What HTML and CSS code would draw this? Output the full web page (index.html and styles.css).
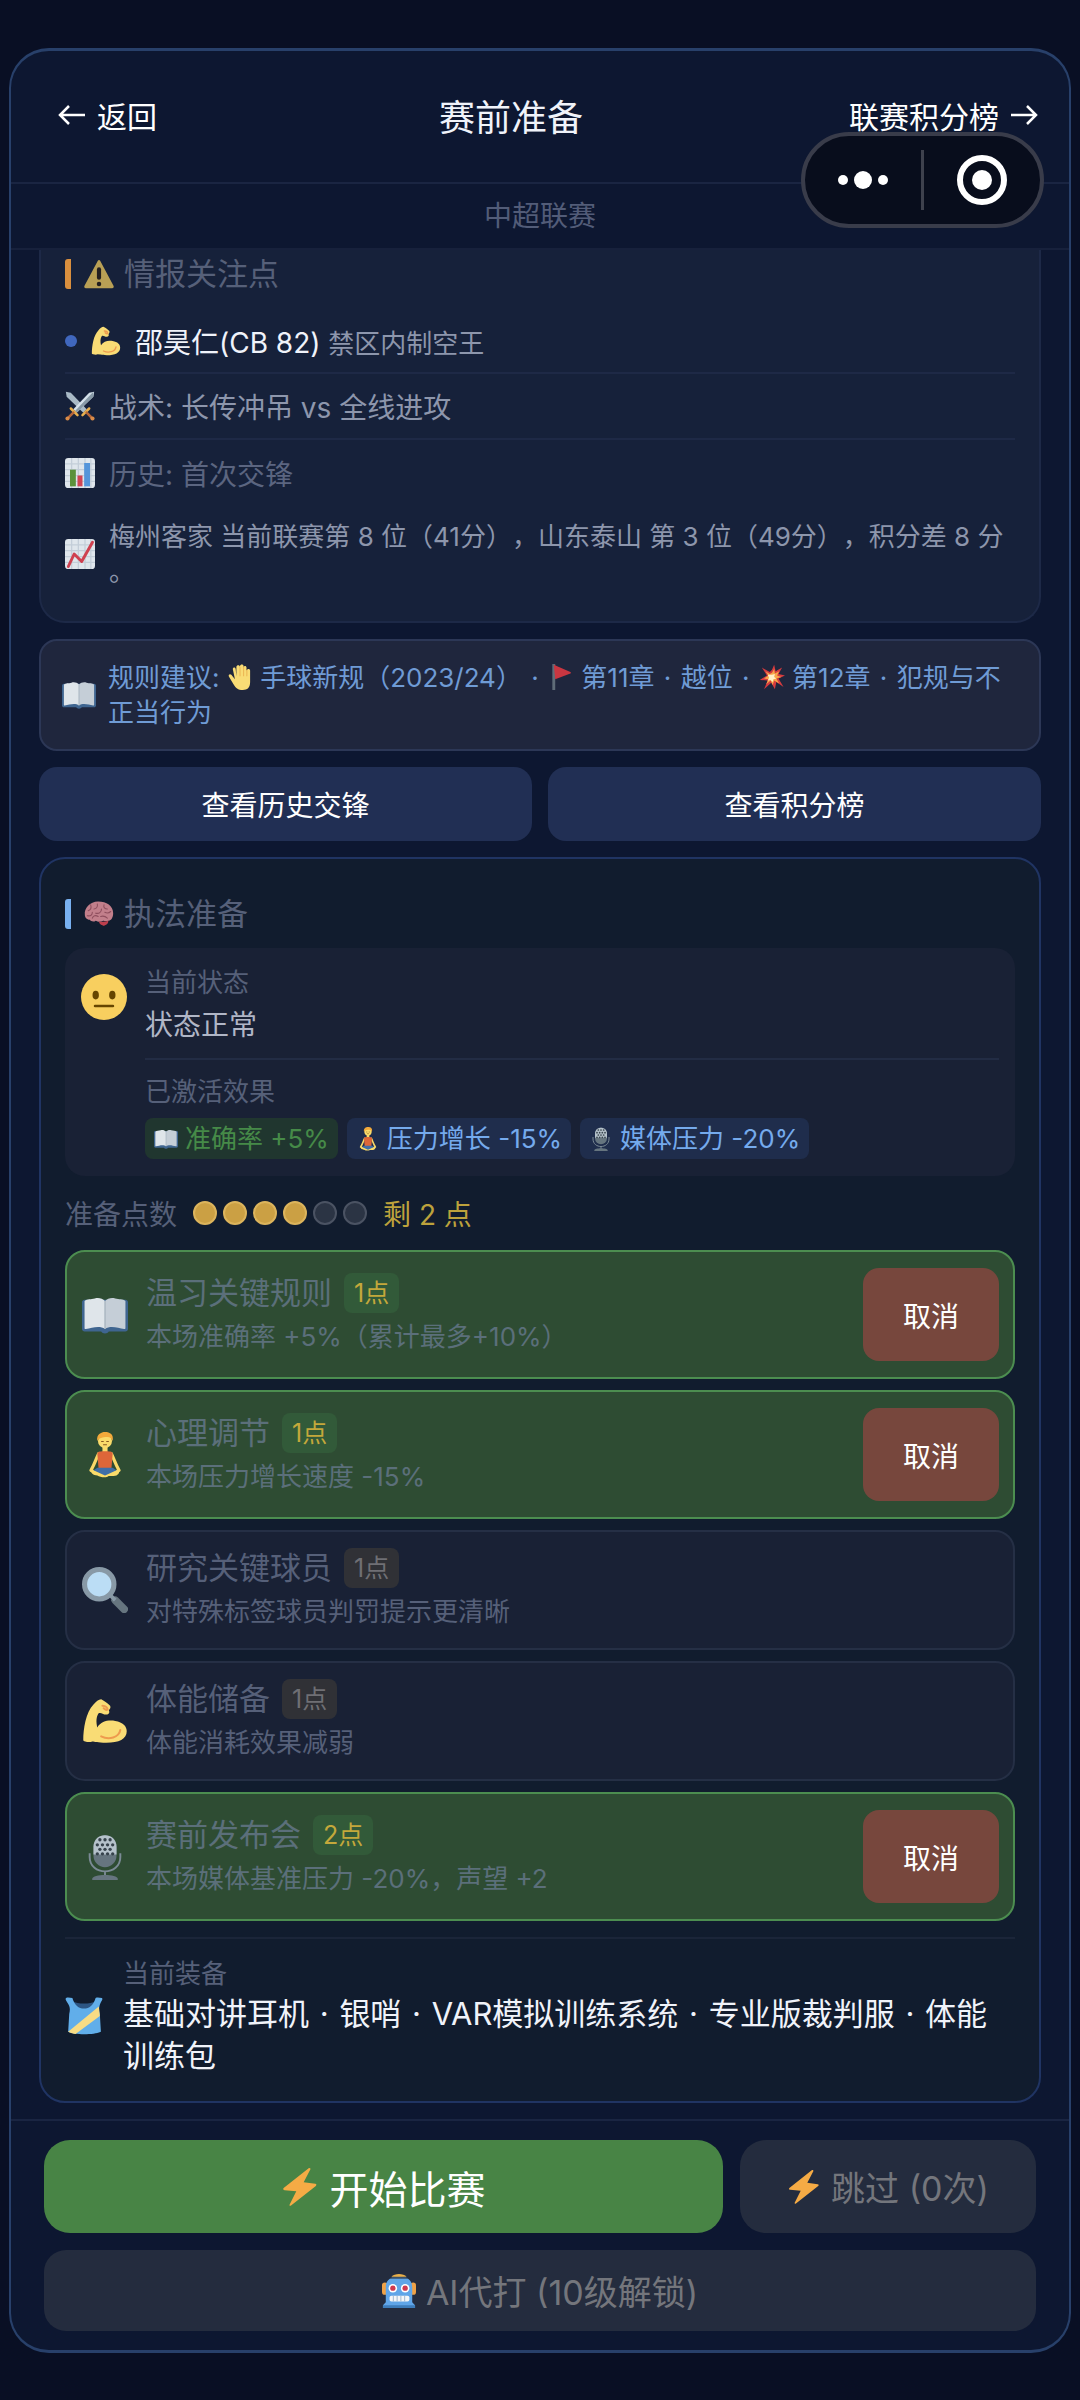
FILE: index.html
```html
<!DOCTYPE html>
<html lang="zh-CN">
<head>
    <meta charset="UTF-8">
    <meta name="viewport" content="width=device-width, initial-scale=1.0">
    <title>赛前准备</title>
    <link rel="stylesheet" href="styles.css">
</head>
<body>
    <!-- 图标 -->
    <svg class="sprite" aria-hidden="true">
        <symbol id="i-warn" viewBox="0 0 36 36">
            <path fill="#b9a055" d="M16.6 2.2c.6-1.2 2.2-1.2 2.8 0l16 30c.7 1.3 0 2.8-1.500 2.800H2.100C.6 35-.1 33.500.6 32.200z"/>
            <rect x="15.500" y="10" width="5" height="15" rx="2.500" fill="#231f20"/>
            <circle cx="18" cy="30" r="2.700" fill="#231f20"/>
        </symbol>
        <symbol id="i-arm" viewBox="0 0 36 36">
            <path fill="#f9dc75" d="M1 33c0-9 2-22 8-28 2-2 4-4 6-4 2 1 5 3 7 5 1 2-1 3-1 4 1 1 0 3-2 3-3 0-4-2-6-1-2 3-2 7-1 11 3-5 9-6 14-5 6 1 9 4 9 8 0 6-6 9-16 9-7 0-9-1-11-1-2 1-7 0-7-1z"/>
            <path fill="none" stroke="#ee9b4e" stroke-width="1.600" stroke-linecap="round" d="M15 30c6 3 14 1 15-5M16 6c3 0 4 2 4 3-1 1-2 0-3-1"/>
        </symbol>
        <symbol id="i-swords" viewBox="0 0 36 36">
            <path fill="#a9bac6" d="M1 1l6 1 19 20-4 4L2 7z"/>
            <path fill="#d5e1ea" d="M35 1l-6 1L10 22l4 4L34 7z"/>
            <path fill="#8799a6" d="M34 1L12 24l2 2L34 7z"/>
            <path stroke="#e9b04e" stroke-width="3" stroke-linecap="round" d="M7 21l8 8M29 21l-8 8"/>
            <path stroke="#b5673a" stroke-width="3" stroke-linecap="round" d="M10 26l-7 7M26 26l7 7"/>
            <circle cx="3" cy="33" r="2.500" fill="#d98b48"/>
            <circle cx="33" cy="33" r="2.500" fill="#d98b48"/>
        </symbol>
        <symbol id="i-bars" viewBox="0 0 36 36">
            <rect width="36" height="36" rx="4" fill="#dfe6ec"/>
            <path stroke="#c3ced8" stroke-width="1.500" d="M8 0v36M16 0v36M24 0v36M31 0v36M0 7h36M0 14h36M0 21h36M0 28h36"/>
            <rect x="6" y="14" width="7" height="20" fill="#5c913b"/>
            <rect x="15" y="21" width="6" height="13" fill="#d04554"/>
            <rect x="23" y="6" width="7" height="28" fill="#5495da"/>
        </symbol>
        <symbol id="i-trend" viewBox="0 0 36 36">
            <rect width="36" height="36" rx="4" fill="#dfe6ec"/>
            <path stroke="#c3ced8" stroke-width="1.500" d="M8 0v36M16 0v36M24 0v36M31 0v36M0 7h36M0 14h36M0 21h36M0 28h36"/>
            <path fill="none" stroke="#cf4150" stroke-width="3.500" stroke-linecap="round" stroke-linejoin="round" d="M4 33l7-15 9 9L33 4"/>
        </symbol>
        <symbol id="i-book" viewBox="0 0 36 36">
            <path fill="#3f6590" d="M0 8c0-1 1-2 2-2h32c1 0 2 1 2 2v21c0 1-1 2-2 2H21c-1 2-5 2-6 0H2c-1 0-2-1-2-2z"/>
            <path fill="#dfe5ea" d="M2 7c2-2 5-1 8-2 3-1 6 0 8 2v22c-4-3-10-1-15 0-1 0-1 0-1-1z"/>
            <path fill="#c5ced7" d="M34 7c-2-2-5-1-8-2-3-1-6 0-8 2v22c4-3 10-1 15 0 1 0 1 0 1-1z"/>
            <path stroke="#a5b2be" stroke-width="1" d="M18 7v22"/>
        </symbol>
        <symbol id="i-hand" viewBox="0 0 36 36">
            <path fill="#f9dc75" d="M8 7c0-3 4-3 4 0l1 10V4c0-3 5-3 5 0V3c0-3 5-3 5 0v2c0-3 4-3 4 0v4c1-3 5-3 5 0v16c0 8-4 11-10 11-7 0-10-3-13-8L3 18c-2-3 1-5 3-3l5 6z"/>
            <path stroke="#e6a545" stroke-width="1" d="M18 4v13M23 4v13M27.500 8v9"/>
        </symbol>
        <symbol id="i-flag" viewBox="0 0 36 36">
            <path fill="#5f6c78" d="M6 0h4v36H6z"/>
            <path fill="#c93641" d="M8 1l23 10c1 1 1 2 0 2L10 21z"/>
        </symbol>
        <symbol id="i-boom" viewBox="0 0 36 36">
            <path fill="#d63b3f" d="M18 8l3-7 2 9 9-5-5 9 9 2-9 4 7 12-10-7-2 10-5-9-10 9 5-12-11-1 10-6L4 5l11 6z"/>
            <path fill="#f6a74a" d="M18 12l3-5 1 6 6-3-3 6 6 2-7 2 4 7-7-4-2 6-3-6-6 5 3-7-6-1 6-4-4-6 6 4z"/>
            <path fill="#fff0c8" d="M18 15l4-1-1 4 3 2-4 1-1 4-3-3-4 1 2-4-2-4z"/>
        </symbol>
        <symbol id="i-brain" viewBox="0 0 36 36">
            <path fill="#c27f8b" d="M1 19C0 11 7 3 17 3s18 5 18 14c0 6-3 9-6 9-2 1-5 0-6 0-3 2-7 1-9 0-2 2-6 1-7-1-4 0-6-3-6-6z"/>
            <path fill="#bd3f4d" d="M18 27c4 1 7 0 11-1 1 3-3 6-6 6-2-1-5-2-5-5z"/>
            <path fill="none" stroke="#8f4f5e" stroke-width="1.300" stroke-linecap="round" d="M5 14c3-1 4-4 3-7M4 20c4 1 6-1 6-4M12 12c2 0 5-2 4-6M14 17c4 1 7-1 7-5M24 7c-1 3 1 5 4 5M25 16c2 1 5 1 7-1M10 23c1-3 4-4 7-2M20 21c3-1 6 0 8 2"/>
        </symbol>
        <symbol id="i-face" viewBox="0 0 36 36">
            <circle cx="18" cy="18" r="18" fill="#f8cf5f"/>
            <ellipse cx="11.500" cy="16.500" rx="2.500" ry="3.400" fill="#664500"/>
            <ellipse cx="24.500" cy="16.500" rx="2.500" ry="3.400" fill="#664500"/>
            <rect x="10" y="24" width="16" height="2" rx="1" fill="#664500"/>
        </symbol>
        <symbol id="i-yoga" viewBox="0 0 36 36">
            <path fill="none" stroke="#f9d868" stroke-width="2.500" stroke-linecap="round" stroke-linejoin="round" d="M13 17c-2 4-3 8-6 13l4 2M23 17c2 4 3 8 6 13l-4 2"/>
            <path fill="#fadb6a" d="M16 10h4v6h-4z"/>
            <circle cx="18" cy="7" r="5.500" fill="#fadb6a"/>
            <path fill="#f2a93b" d="M12 7c-1-5 3-7 6-7 4 0 7 2 6 7-1-2-2-3-4-3s-6 0-8 3z"/>
            <path fill="#dd6639" d="M12 17c0-2 3-2 6-2s6 0 6 2l-1 12H13z"/>
            <path fill="#fadb6a" d="M8 30c4 0 7 2 10 3 3-1 6-3 10-3 2 1 1 3-1 4-3 1-6 0-7 1-3 1-6 0-8-1-3 0-6-2-4-4z"/>
            <path fill="#3f6ea8" d="M12 28h12l3 2-9 4-9-4z"/>
            <path fill="none" stroke="#8a5a20" stroke-width=".8" d="M15 7.500h2M19 7.500h2M16.500 10h3"/>
        </symbol>
        <symbol id="i-mic" viewBox="0 0 36 36">
            <rect x="9" y="1" width="18" height="25" rx="9" fill="#66757f"/>
            <path fill="#b4c1ca" d="M9 16v-6c0-12 18-12 18 0v6z"/>
            <g fill="#37434c">
                <circle cx="14" cy="4.500" r="1.300"/><circle cx="18" cy="4.500" r="1.300"/><circle cx="22" cy="4.500" r="1.300"/>
                <circle cx="12" cy="8.500" r="1.300"/><circle cx="16" cy="8.500" r="1.300"/><circle cx="20" cy="8.500" r="1.300"/><circle cx="24" cy="8.500" r="1.300"/>
                <circle cx="14" cy="12" r="1.300"/><circle cx="18" cy="12" r="1.300"/><circle cx="22" cy="12" r="1.300"/>
                <circle cx="12" cy="15.500" r="1.300"/><circle cx="16" cy="15.500" r="1.300"/><circle cx="20" cy="15.500" r="1.300"/><circle cx="24" cy="15.500" r="1.300"/>
            </g>
            <path fill="none" stroke="#7b8a95" stroke-width="1.500" d="M6 15v3c0 15 24 15 24 0v-3M18 29v4"/>
            <path fill="#66757f" d="M8 35c0-4 20-4 20 0v1H8z"/>
        </symbol>
        <symbol id="i-lens" viewBox="0 0 36 36">
            <path stroke="#66757f" stroke-width="6" stroke-linecap="round" d="M26 26l7 7"/>
            <path stroke="#8899a6" stroke-width="3" d="M21 21l5 5"/>
            <circle cx="13.500" cy="13.500" r="11.500" fill="#bbddf5" stroke="#8899a6" stroke-width="4"/>
        </symbol>
        <symbol id="i-shirt" viewBox="0 0 36 36">
            <path fill="#2d5684" d="M7 4c5 3 17 3 22 0l-3 9H10z"/>
            <path fill="#61aeea" d="M1 1c2-1 4 0 6 0 2 7 6 10 11 10s9-3 11-10c2-1 4 0 6 0 1 1 0 2-1 4-2 4-2 7-1 11l1 17c-6 3-26 3-31 0l1-17c1-4 1-7-2-11C1 3 0 2 1 1z"/>
            <path fill="#f8dc84" d="M32 9l1 9L10 35c-2 0-5-1-7-2z"/>
        </symbol>
        <symbol id="i-bolt" viewBox="0 0 36 36">
            <path fill="#f5ab45" d="M26.500 0L2.500 19c-1 1 0 2 1 2l11 1L8 35c0 1 1 1 1.500.5L33 17c1-1 .5-2-.5-2l-11-1.500L28 1c0-1-1-1-1.500-1z"/>
        </symbol>
        <symbol id="i-robot" viewBox="0 0 36 36">
            <rect x="0" y="9" width="6" height="13" rx="3" fill="#f0a246"/>
            <rect x="30" y="9" width="6" height="13" rx="3" fill="#f0a246"/>
            <path fill="#5fa5e8" d="M4 30V14C4 6 10 3 18 3s14 3 14 11v16l3 3v3H1v-3z"/>
            <path fill="#3a516b" d="M8 5c4-4 16-4 20 0z"/>
            <path fill="#eab04a" d="M10 3c3-4 13-4 16 0z"/>
            <circle cx="11.500" cy="15" r="4.500" fill="#fff"/><circle cx="11.500" cy="15" r="2.800" fill="#cf3a50"/>
            <circle cx="24.500" cy="15" r="4.500" fill="#fff"/><circle cx="24.500" cy="15" r="2.800" fill="#cf3a50"/>
            <rect x="8" y="23" width="21" height="6" rx="2" fill="#f4f6f8"/>
            <path stroke="#9ab4cc" stroke-width="1" d="M12 23v6M16 23v6M20 23v6M24 23v6"/>
            <path fill="#3d7cba" d="M1 33h34v3H1z"/>
        </symbol>
        <symbol id="i-left" viewBox="0 0 30 30">
            <path fill="none" stroke="#fff" stroke-width="2.500" d="M28 15H3M12 6l-9 9 9 9"/>
        </symbol>
        <symbol id="i-right" viewBox="0 0 30 30">
            <path fill="none" stroke="#fff" stroke-width="2.500" d="M2 15h25M18 6l9 9-9 9"/>
        </symbol>
    </svg>

    <div class="phone">
        <header class="topbar">
            <button class="nav-btn nav-back"><svg class="i30"><use href="#i-left"/></svg>返回</button>
            <h1>赛前准备</h1>
            <button class="nav-btn">联赛积分榜<svg class="i30"><use href="#i-right"/></svg></button>
        </header>
        <div class="league">中超联赛</div>

        <main class="content">
            <section class="card intel">
                <h2 class="card-title orange"><svg class="i30"><use href="#i-warn"/></svg>情报关注点</h2>
                <div class="row player">
                    <span class="dot"></span>
                    <svg class="i30"><use href="#i-arm"/></svg>
                    <p><strong>邵昊仁(CB 82)</strong> <span class="note">禁区内制空王</span></p>
                </div>
                <div class="row line"><svg class="i30"><use href="#i-swords"/></svg>战术: 长传冲吊 vs 全线进攻</div>
                <div class="row dim"><svg class="i30"><use href="#i-bars"/></svg>历史: 首次交锋</div>
                <div class="row rank">
                    <svg class="i30"><use href="#i-trend"/></svg>
                    <p>梅州客家 当前联赛第 8 位（41分），山东泰山 第 3 位（49分），积分差 8 分。</p>
                </div>
            </section>

            <section class="card rules">
                <svg class="i34"><use href="#i-book"/></svg>
                <p>规则建议: <svg class="i26"><use href="#i-hand"/></svg> 手球新规（2023/24） <span class="sep">·</span> <svg class="i26"><use href="#i-flag"/></svg> 第11章 <span class="sep">·</span> 越位 <span class="sep">·</span> <svg class="i26"><use href="#i-boom"/></svg> 第12章 <span class="sep">·</span> 犯规与不正当行为</p>
            </section>

            <div class="links">
                <button>查看历史交锋</button>
                <button>查看积分榜</button>
            </div>

            <section class="card prep">
                <h2 class="card-title blue"><svg class="i30"><use href="#i-brain"/></svg>执法准备</h2>
                <div class="status">
                    <svg class="i46"><use href="#i-face"/></svg>
                    <div class="status-body">
                        <div class="label">当前状态</div>
                        <div class="state">状态正常</div>
                        <div class="effects">
                            <div class="label">已激活效果</div>
                            <div class="tags">
                                <span class="tag green"><svg class="i24"><use href="#i-book"/></svg>准确率 +5%</span>
                                <span class="tag"><svg class="i24"><use href="#i-yoga"/></svg>压力增长 -15%</span>
                                <span class="tag"><svg class="i24"><use href="#i-mic"/></svg>媒体压力 -20%</span>
                            </div>
                        </div>
                    </div>
                </div>

                <div class="points">
                    <span>准备点数</span>
                    <div class="dots"><i class="on"></i><i class="on"></i><i class="on"></i><i class="on"></i><i></i><i></i></div>
                    <span class="left">剩 2 点</span>
                </div>

                <ul class="items">
                    <li class="item active">
                        <svg class="i46"><use href="#i-book"/></svg>
                        <div class="item-text">
                            <h3>温习关键规则 <span class="cost">1点</span></h3>
                            <p>本场准确率 +5%（累计最多+10%）</p>
                        </div>
                        <button>取消</button>
                    </li>
                    <li class="item active">
                        <svg class="i46"><use href="#i-yoga"/></svg>
                        <div class="item-text">
                            <h3>心理调节 <span class="cost">1点</span></h3>
                            <p>本场压力增长速度 -15%</p>
                        </div>
                        <button>取消</button>
                    </li>
                    <li class="item">
                        <svg class="i46"><use href="#i-lens"/></svg>
                        <div class="item-text">
                            <h3>研究关键球员 <span class="cost">1点</span></h3>
                            <p>对特殊标签球员判罚提示更清晰</p>
                        </div>
                    </li>
                    <li class="item">
                        <svg class="i46"><use href="#i-arm"/></svg>
                        <div class="item-text">
                            <h3>体能储备 <span class="cost">1点</span></h3>
                            <p>体能消耗效果减弱</p>
                        </div>
                    </li>
                    <li class="item active">
                        <svg class="i46"><use href="#i-mic"/></svg>
                        <div class="item-text">
                            <h3>赛前发布会 <span class="cost">2点</span></h3>
                            <p>本场媒体基准压力 -20%，声望 +2</p>
                        </div>
                        <button>取消</button>
                    </li>
                </ul>

                <div class="gear">
                    <svg class="i38"><use href="#i-shirt"/></svg>
                    <div>
                        <div class="label">当前装备</div>
                        <p>基础对讲耳机 <span class="sep">·</span> 银哨 <span class="sep">·</span> VAR模拟训练系统 <span class="sep">·</span> 专业版裁判服 <span class="sep">·</span> 体能训练包</p>
                    </div>
                </div>
            </section>
        </main>

        <footer class="actions">
            <button class="start"><svg class="i38"><use href="#i-bolt"/></svg>开始比赛</button>
            <button class="skip"><svg class="i34"><use href="#i-bolt"/></svg>跳过 (0次)</button>
            <button class="ai"><svg class="i34"><use href="#i-robot"/></svg>AI代打 (10级解锁)</button>
        </footer>

        <div class="capsule">
            <button aria-label="更多"><svg viewBox="0 0 52 20" width="52" height="20"><circle cx="6" cy="10" r="5"/><circle cx="26" cy="10" r="9"/><circle cx="46" cy="10" r="5"/></svg></button>
            <button aria-label="关闭"><svg viewBox="0 0 52 52" width="52" height="52"><circle cx="26" cy="26" r="22" class="ring"/><circle cx="26" cy="26" r="10"/></svg></button>
        </div>
    </div>
</body>
</html>
```

FILE: styles.css
```css
* {
    box-sizing: border-box;
}
body {
    margin: 0;
    padding: 48px 9px;
    background: #090f24;
    color: #f0f3fa;
    font-family: Inter, "Noto Sans CJK SC", sans-serif;
    font-size: 28px;
    text-spacing-trim: space-all;
}
h1, h2, h3, p, ul {
    margin: 0;
    padding: 0;
    font-weight: 400;
}
button {
    font: inherit;
    color: #fff;
    border: none;
    padding: 0;
    background: none;
    cursor: pointer;
}
svg {
    flex: none;
}
.sprite {
    display: none;
}
.i24 { width: 24px; height: 24px; }
.i26 { width: 26px; height: 26px; }
.i30 { width: 30px; height: 30px; }
.i34 { width: 34px; height: 34px; }
.i38 { width: 38px; height: 38px; }
.i46 { width: 46px; height: 46px; }

.phone {
    position: relative;
    border: 2px solid #28406a;
    border-top-width: 3px;
    border-bottom-width: 3px;
    border-radius: 40px;
    background: #0d1731;
}

/* header */
.topbar {
    display: flex;
    align-items: center;
    justify-content: space-between;
    height: 133px;
    padding: 0 30px 4px 46px;
    border-bottom: 2px solid #1a2542;
}
.nav-btn {
    display: flex;
    align-items: center;
    gap: 10px;
    font-size: 30px;
}
.nav-back {
    padding-right: 16px;
}
h1 {
    font-size: 36px;
}
.league {
    height: 66px;
    line-height: 64px;
    text-align: center;
    color: #525c78;
    border-bottom: 2px solid #17213c;
}

/* content */
.content {
    display: flex;
    flex-direction: column;
    gap: 16px;
    padding: 0 28px 16px;
}
.card {
    border: 2px solid #1d2947;
    border-radius: 26px;
    background: #16213a;
    padding: 0 24px;
}
.card-title {
    display: flex;
    align-items: center;
    gap: 10px;
    height: 30px;
    border-left: 6px solid #d98f3e;
    border-radius: 3px;
    padding-left: 13px;
    font-size: 31px;
    line-height: 30px;
    color: #566079;
}
.blue {
    border-color: #78b0f0;
}
.intel {
    border-top: none;
    border-radius: 0 0 26px 26px;
    padding-top: 9px;
    padding-bottom: 32px;
}
.row {
    display: flex;
    align-items: center;
    gap: 14px;
    height: 66px;
    color: #8d96ac;
}
.player {
    height: 62px;
    margin-top: 23px;
    padding-bottom: 2px;
    border-bottom: 2px solid #1e2946;
}
.line {
    border-bottom: 2px solid #1e2946;
}
.dot {
    width: 12px;
    height: 12px;
    border-radius: 50%;
    background: #4067bd;
}
.player strong {
    font-weight: 400;
    color: #f0f3fa;
}
.note {
    font-size: 26px;
}
.dim {
    color: #5b6580;
}
.rank {
    height: auto;
    padding-top: 13px;
}
.rank p {
    font-size: 26px;
    line-height: 35px;
    line-break: anywhere;
}
.rules {
    display: flex;
    align-items: center;
    gap: 12px;
    padding: 19px 20px 19px 21px;
    border-color: #2c3756;
    border-radius: 18px;
    background: #1f263d;
    color: #6f9bd5;
    font-size: 26px;
    line-height: 35px;
}
.rules p svg {
    vertical-align: -3px;
}
.sep {
    padding: 0 2px;
}
.links {
    display: grid;
    grid-template-columns: 1fr 1fr;
    gap: 16px;
}
.links button {
    height: 74px;
    border-radius: 18px;
    background: #212f54;
}

/* preparation */
.prep {
    padding-top: 40px;
    padding-bottom: 24px;
    border-color: #203463;
    background: #111c2e;
}
.status {
    display: flex;
    gap: 18px;
    margin-top: 19px;
    padding: 16px 16px 17px;
    border-radius: 20px;
    background: #192135;
}
.status > svg {
    margin-top: 10px;
}
.status-body {
    flex: 1;
}
.label {
    font-size: 26px;
    line-height: 38px;
    color: #566079;
}
.state {
    line-height: 46px;
    color: #b0b6c6;
}
.effects {
    margin-top: 10px;
    padding-top: 13px;
    border-top: 2px solid #222c44;
}
.tags {
    display: flex;
    gap: 9px;
    margin-top: 7px;
}
.tag {
    display: flex;
    align-items: center;
    gap: 7px;
    height: 41px;
    padding: 0 9px;
    border-radius: 8px;
    background: #1f2d4c;
    color: #75aaec;
    font-size: 26px;
    line-height: 38px;
}
.tag.green {
    background: #20362f;
    color: #468a48;
}
.points {
    display: flex;
    align-items: center;
    gap: 16px;
    height: 74px;
    color: #566079;
}
.dots {
    display: flex;
    gap: 6px;
}
.dots i {
    width: 24px;
    height: 24px;
    border: 2px solid #4b5363;
    border-radius: 50%;
    background: #2b3444;
}
.dots .on {
    border-color: #dcb45c;
    background: #cba044;
}
.left {
    color: #bda23c;
}
.items {
    display: grid;
    gap: 11px;
    list-style: none;
}
.item {
    display: flex;
    align-items: center;
    gap: 18px;
    min-height: 120px;
    padding: 0 14px 0 15px;
    border: 2px solid #252f45;
    border-radius: 20px;
    background: #192135;
    color: #566079;
}
.item.active {
    min-height: 129px;
    border-color: #4c8d50;
    background: #2e4c33;
    color: #5b6f7a;
}
.item-text {
    flex: 1;
}
h3 {
    display: flex;
    align-items: center;
    gap: 12px;
    font-size: 31px;
    line-height: 44px;
}
.cost {
    padding: 0 10px;
    border-radius: 8px;
    background: #303136;
    color: #6f6f74;
    font-size: 25px;
    line-height: 40px;
}
.active .cost {
    background: #325a39;
    color: #c4a83b;
}
.item p {
    font-size: 26px;
    line-height: 44px;
}
.item button {
    width: 136px;
    height: 93px;
    border-radius: 16px;
    background: #77473d;
}
.gear {
    display: flex;
    align-items: center;
    gap: 20px;
    margin-top: 16px;
    padding-top: 16px;
    border-top: 2px solid #1b2539;
}
.gear p {
    font-size: 31px;
    line-height: 42px;
}

/* footer */
.actions {
    display: grid;
    grid-template-columns: 679fr 296fr;
    gap: 17px;
    padding: 19px 33px;
    border-top: 2px solid #1a2542;
}
.actions button {
    display: flex;
    align-items: center;
    justify-content: center;
    gap: 10px;
    height: 93px;
    border-radius: 26px;
    background: #242c3e;
    color: #74767c;
    font-size: 34px;
}
.actions .start {
    background: #488445;
    color: #fff;
    font-size: 39px;
}
.actions .ai {
    grid-column: 1 / -1;
    height: 81px;
    border-radius: 22px;
}

/* floating capsule over the header */
.capsule {
    position: absolute;
    top: 81px;
    right: 25px;
    display: flex;
    align-items: center;
    width: 243px;
    height: 96px;
    border: 4px solid #393c4a;
    border-radius: 48px;
    background: #080d1c;
    fill: #fff;
}
.capsule button {
    display: flex;
    flex: 1;
    align-items: center;
    justify-content: center;
    height: 60px;
}
.capsule button + button {
    border-left: 3px solid #3e414d;
}
.ring {
    fill: none;
    stroke: #fff;
    stroke-width: 6;
}
```
